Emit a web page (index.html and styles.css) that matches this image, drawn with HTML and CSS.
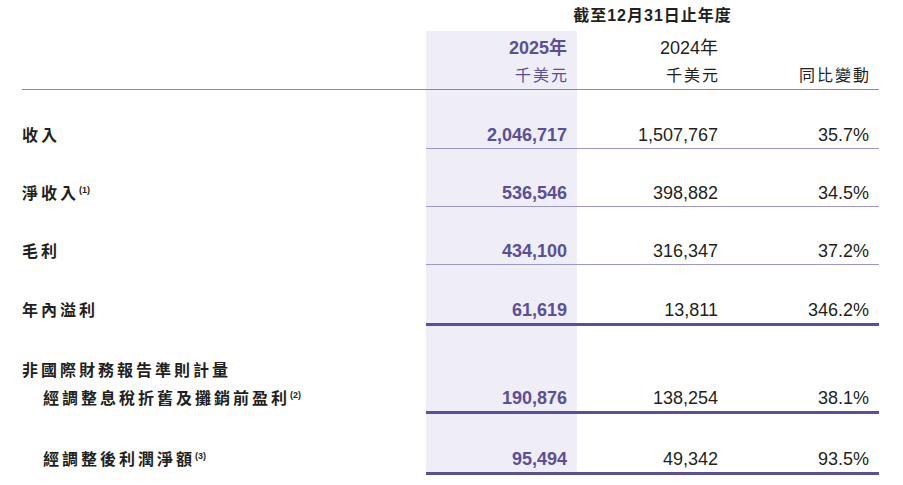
FILE: index.html
```html
<!DOCTYPE html>
<html lang="zh-Hant">
<head>
<meta charset="utf-8">
<title>財務摘要</title>
<link rel="stylesheet" href="styles.css">
</head>
<body>
<div class="report">
  <div class="row title-row">
    <div class="cell"></div>
    <div class="cell title">截至12月31日止年度</div>
  </div>
  <div class="row head-row">
    <div class="cell"></div>
    <div class="cell hnum cur"><div class="yr">2025年</div><div class="unit">千美元</div></div>
    <div class="cell hnum"><div class="yr">2024年</div><div class="unit">千美元</div></div>
    <div class="cell hnum"><div class="yr">&nbsp;</div><div class="unit">同比變動</div></div>
  </div>

  <div class="row data r1 thin">
    <div class="cell label"><div>收入</div></div>
    <div class="cell num cur">2,046,717</div>
    <div class="cell num">1,507,767</div>
    <div class="cell num">35.7%</div>
  </div>
  <div class="row data thin">
    <div class="cell label"><div><span class="t">淨收入</span><sup>(1)</sup></div></div>
    <div class="cell num cur">536,546</div>
    <div class="cell num">398,882</div>
    <div class="cell num">34.5%</div>
  </div>
  <div class="row data thin">
    <div class="cell label"><div>毛利</div></div>
    <div class="cell num cur">434,100</div>
    <div class="cell num">316,347</div>
    <div class="cell num">37.2%</div>
  </div>
  <div class="row data thick">
    <div class="cell label"><div>年內溢利</div></div>
    <div class="cell num cur">61,619</div>
    <div class="cell num">13,811</div>
    <div class="cell num">346.2%</div>
  </div>
  <div class="row data thick group">
    <div class="cell label multi">
      <div>非國際財務報告準則計量</div>
      <div class="indent"><span class="t">經調整息稅折舊及攤銷前盈利</span><sup>(2)</sup></div>
    </div>
    <div class="cell num cur">190,876</div>
    <div class="cell num">138,254</div>
    <div class="cell num">38.1%</div>
  </div>
  <div class="row data thick">
    <div class="cell label"><div class="indent"><span class="t">經調整後利潤淨額</span><sup>(3)</sup></div></div>
    <div class="cell num cur">95,494</div>
    <div class="cell num">49,342</div>
    <div class="cell num">93.5%</div>
  </div>
</div>
</body>
</html>
```

FILE: styles.css
```css
html, body {
  margin: 0;
  padding: 0;
  background: #ffffff;
}
body {
  font-family: "Liberation Sans", "Noto Sans CJK TC", sans-serif;
  color: #231f20;
}
.report {
  margin-left: 22px;
  width: 857px;
}
.row {
  display: grid;
  grid-template-columns: 404px 151px 151px 151px;
  box-sizing: border-box;
}
.cell {
  box-sizing: border-box;
}
.title-row {
  height: 31px;
}
.title {
  grid-column: 2 / 5;
  text-align: center;
  font-weight: 700;
  font-size: 16px;
  line-height: 22px;
  padding-top: 5px;
  letter-spacing: 1px;
}
.head-row {
  height: 59px;
  border-bottom: 1px solid #8a82ba;
}
.hnum {
  text-align: right;
  padding: 4px 10px 0 0;
  line-height: 27px;
}
.yr {
  font-size: 18px;
}
.unit {
  font-size: 16px;
  letter-spacing: 2px;
  margin-right: -2px;
}
.cur {
  background: #efedf6;
  color: #5b4f96;
}
.hnum.cur .yr {
  font-weight: 700;
}
.data {
  height: 58px;
}
.data.r1 {
  height: 59px;
}
.data.thick {
  height: 61px;
}
.data.group {
  height: 88px;
}
.num {
  display: flex;
  align-items: flex-end;
  justify-content: flex-end;
  padding: 0 10px 2px 0;
  font-size: 18px;
  line-height: 22px;
}
.num.cur {
  font-weight: 700;
}
.thin .num {
  border-bottom: 1px solid #9d96c8;
}
.thick .num {
  border-bottom: 3px solid #5b4f96;
}
.label {
  display: flex;
  flex-direction: column;
  justify-content: flex-end;
  padding-bottom: 2px;
  font-size: 16px;
  font-weight: 700;
  line-height: 22px;
  letter-spacing: 3px;
}
.thick .label {
  padding-bottom: 4px;
}
.label.multi div + div {
  margin-top: 6px;
}
.indent {
  padding-left: 21px;
}
.t {
  letter-spacing: 3px;
}
sup {
  font-size: 9px;
  font-weight: 700;
  letter-spacing: 0;
  line-height: 0;
  vertical-align: 6px;
}
```
